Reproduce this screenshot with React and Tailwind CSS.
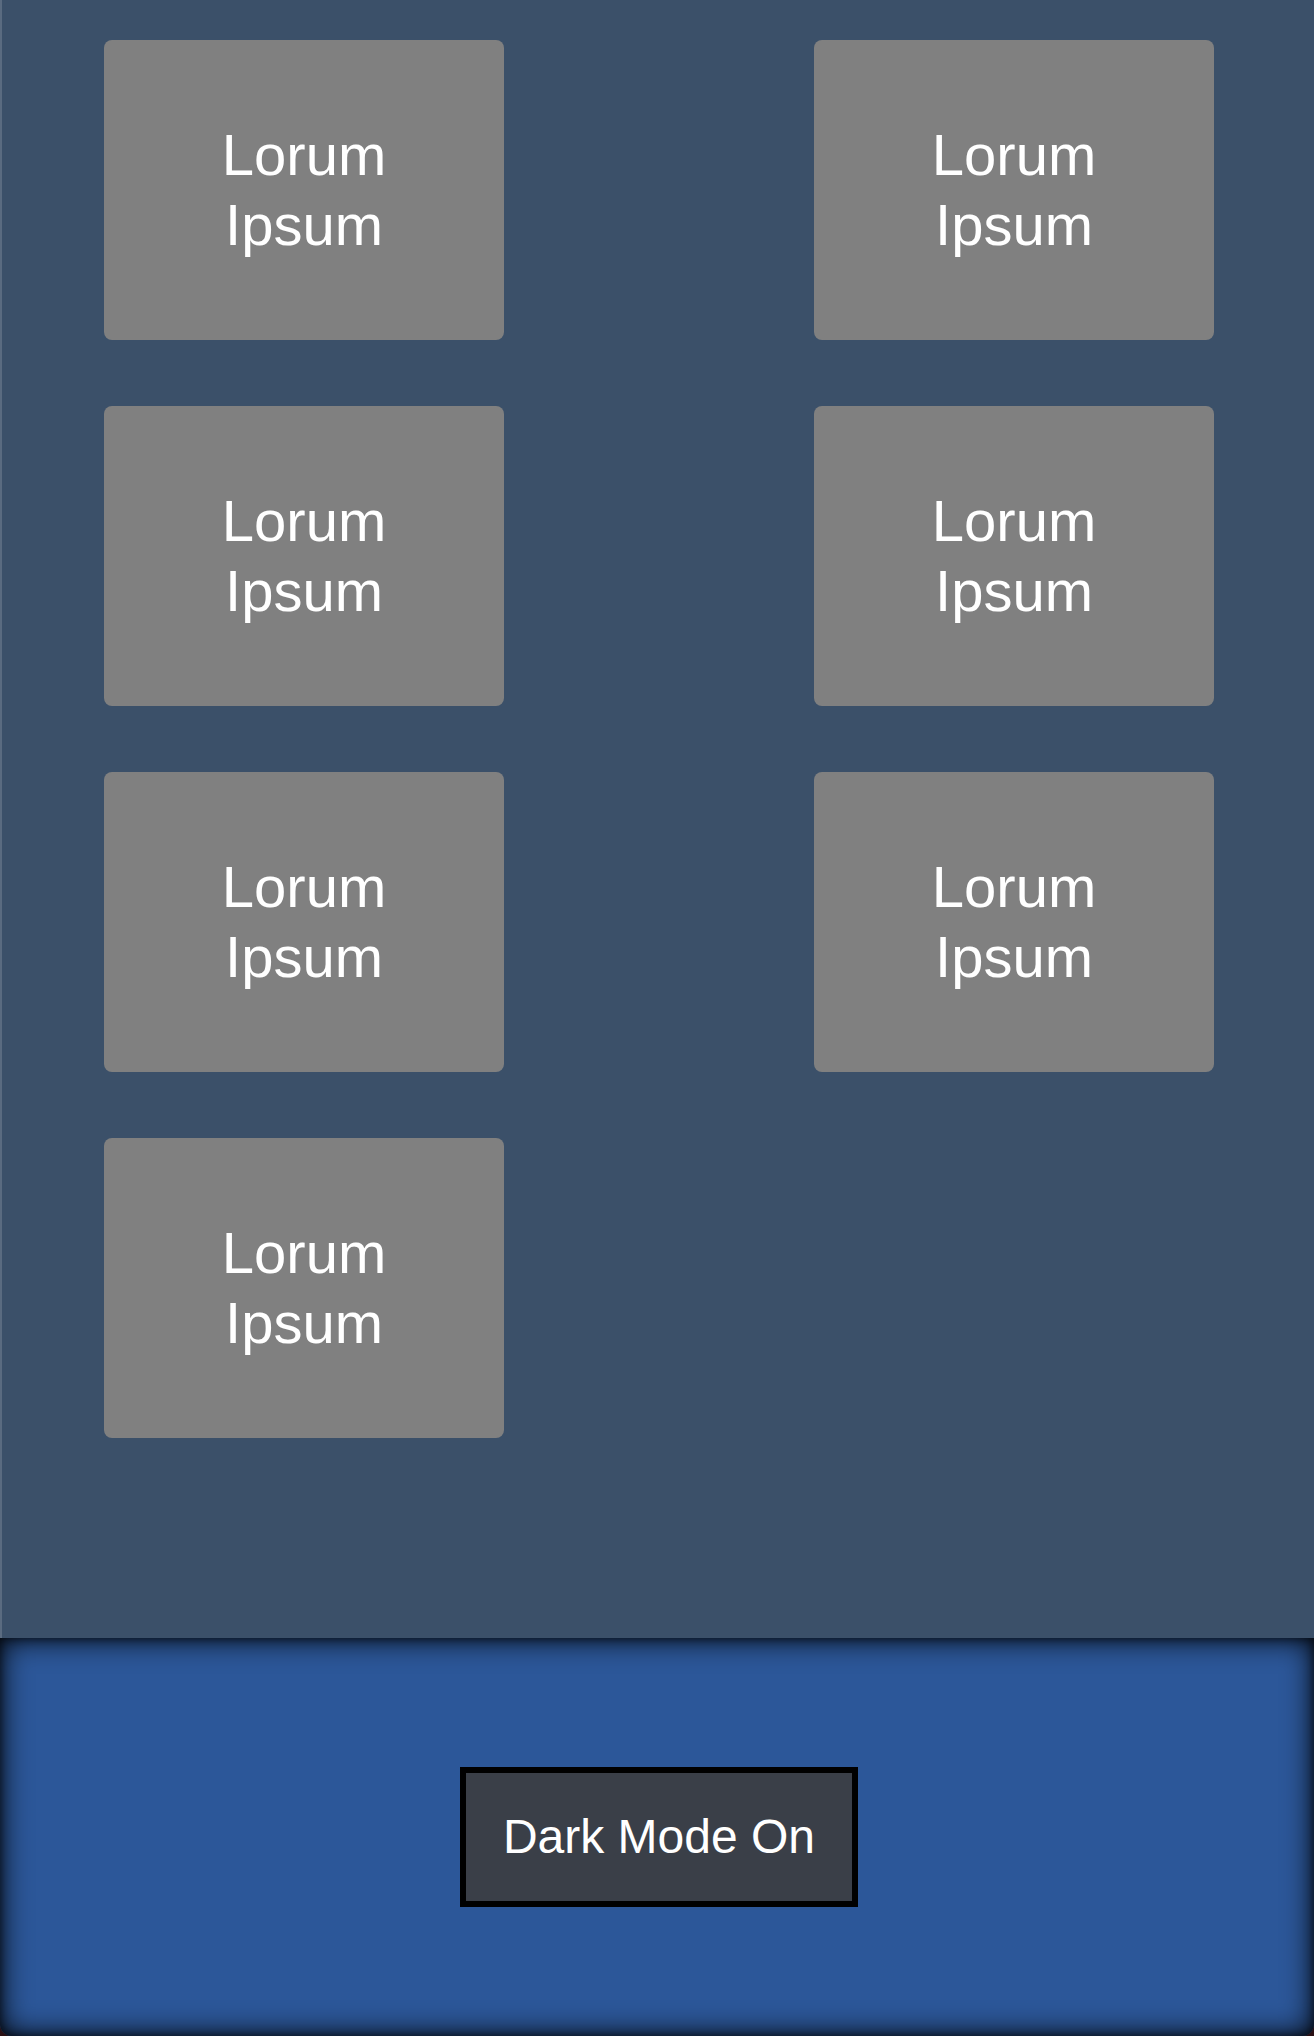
import { useState } from 'react';

const cards = Array.from({ length: 7 }, (_, i) => i);

const App = () => {
  const [darkMode, setDarkMode] = useState(true);

  return (
    <div className="w-[1314px] min-h-[2036px] bg-[#2a1014] flex flex-col font-['Liberation_Sans',Arial,sans-serif]">
      {/* Card grid */}
      <main className="h-[1638px] bg-[#3b5069] border-l-2 border-[#5a6b80] pl-[102px] pt-10">
        <div className="grid grid-cols-[400px_400px] gap-x-[310px] gap-y-[66px]">
          {cards.map((i) => (
            <div
              key={i}
              className="h-[300px] rounded-lg bg-[#808080] flex items-center justify-center text-center text-white text-[58px] leading-[70px]"
            >
              Lorum
              <br />
              Ipsum
            </div>
          ))}
        </div>
      </main>

      {/* Footer toggle */}
      <footer className="h-[398px] bg-[#2c5799] rounded-b-xl shadow-[inset_0_0_30px_#000,inset_0_0_10px_rgba(0,0,0,0.6)] flex items-center justify-center pl-[4px]">
        <button
          type="button"
          onClick={() => setDarkMode(!darkMode)}
          className="w-[398px] h-[140px] border-[6px] border-black bg-[#3a3f48] text-white text-[48px] leading-none"
        >
          {darkMode ? 'Dark Mode On' : 'Dark Mode Off'}
        </button>
      </footer>
    </div>
  );
};

export default App;
